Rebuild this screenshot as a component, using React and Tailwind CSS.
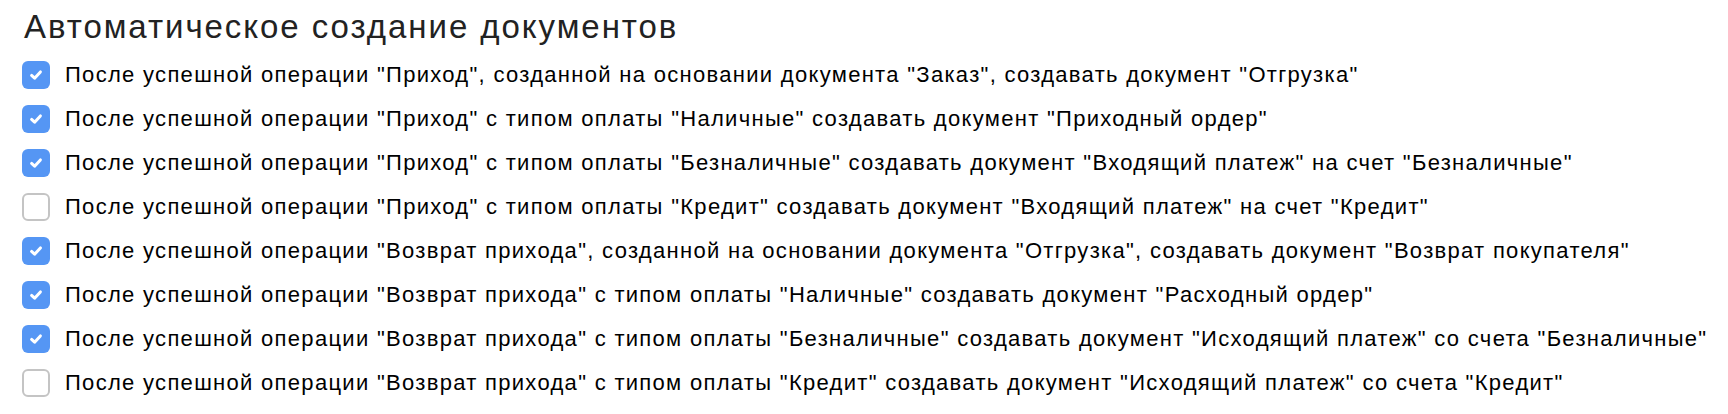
import React from 'react';

const options = [
  { checked: true, label: 'После успешной операции "Приход", созданной на основании документа "Заказ", создавать документ "Отгрузка"' },
  { checked: true, label: 'После успешной операции "Приход" с типом оплаты "Наличные" создавать документ "Приходный ордер"' },
  { checked: true, label: 'После успешной операции "Приход" с типом оплаты "Безналичные" создавать документ "Входящий платеж" на счет "Безналичные"' },
  { checked: false, label: 'После успешной операции "Приход" с типом оплаты "Кредит" создавать документ "Входящий платеж" на счет "Кредит"' },
  { checked: true, label: 'После успешной операции "Возврат прихода", созданной на основании документа "Отгрузка", создавать документ "Возврат покупателя"' },
  { checked: true, label: 'После успешной операции "Возврат прихода" с типом оплаты "Наличные" создавать документ "Расходный ордер"' },
  { checked: true, label: 'После успешной операции "Возврат прихода" с типом оплаты "Безналичные" создавать документ "Исходящий платеж" со счета "Безналичные"' },
  { checked: false, label: 'После успешной операции "Возврат прихода" с типом оплаты "Кредит" создавать документ "Исходящий платеж" со счета "Кредит"' },
];

function Checkbox({ checked, onChange }) {
  return (
    <button
      type="button"
      onClick={onChange}
      className={
        checked
          ? 'w-[28px] h-[28px] shrink-0 rounded-[6px] bg-[#5596f4] flex items-center justify-center'
          : 'w-[28px] h-[28px] shrink-0 rounded-[6px] bg-white border-2 border-[#c4c4c4]'
      }
    >
      {checked && (
        <svg width="14" height="12" viewBox="0 0 14 12" fill="none">
          <path d="M2.6 6.4 L5.6 9.2 L11.4 2.9" stroke="white" strokeWidth="3" strokeLinecap="round" strokeLinejoin="round" />
        </svg>
      )}
    </button>
  );
}

export default function App() {
  const [items, setItems] = React.useState(options);

  const toggle = (i) => {
    setItems(items.map((it, idx) => (idx === i ? { ...it, checked: !it.checked } : it)));
  };

  return (
    <div className="w-[1728px] h-[414px] bg-white px-[22px] pt-[7px] font-['Liberation_Sans',Arial,sans-serif]">
      <h1 className="ml-[2px] text-[33px] leading-[40px] tracking-[1.95px] text-[#222]">
        Автоматическое создание документов
      </h1>
      <div className="mt-[6px] flex flex-col">
        {items.map((it, i) => (
          <label key={i} className="h-[44px] flex items-center gap-[15px] cursor-pointer">
            <Checkbox checked={it.checked} onChange={() => toggle(i)} />
            <span className="text-[22px] leading-[28px] tracking-[1.3px] text-black whitespace-nowrap">{it.label}</span>
          </label>
        ))}
      </div>
    </div>
  );
}
